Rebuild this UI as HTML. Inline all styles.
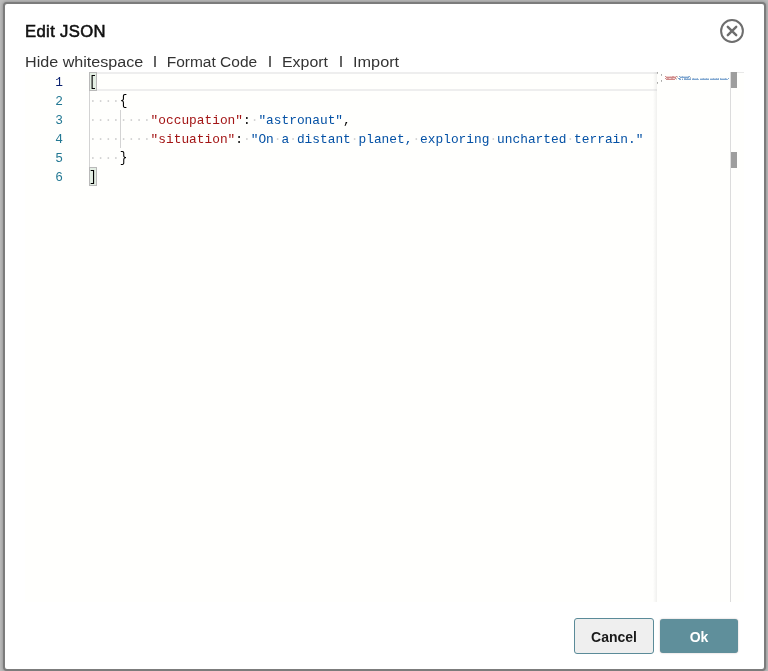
<!DOCTYPE html>
<html><head><meta charset="utf-8">
<style>
*{box-sizing:border-box;margin:0;padding:0}
body{will-change:transform}html,body{width:768px;height:671px;overflow:hidden;background:#bcbcbc;font-family:"Liberation Sans",sans-serif}
.dlg{position:absolute;left:3px;top:2px;width:763px;height:669px;border:2px solid #7c7c7c;border-radius:4px;background:#fff;box-shadow:0 0 3px 1px rgba(0,0,0,.18)}
.abs{position:absolute;white-space:pre}
.title{left:25px;top:22px;font-size:16px;-webkit-text-stroke:0.55px #111;letter-spacing:0.35px;color:#111;line-height:20px;transform:scaleX(1.04);transform-origin:0 0}
.tb{top:53px;font-size:15.5px;color:#333;line-height:18px}
.sep{position:absolute;top:56px;width:1.5px;height:11px;background:#666}
.editor{position:absolute;left:25px;top:72px;width:719px;height:530px;background:#fffffd}
.ln{position:absolute;left:0;margin-top:1px;width:38px;text-align:right;font-family:"Liberation Mono",monospace;font-size:12.83px;line-height:19px;color:#237893}
.code{position:absolute;left:64px;margin-top:1px;font-family:"Liberation Mono",monospace;font-size:12.83px;line-height:19px;white-space:pre;color:#000}
.b{display:inline-block;transform:scaleY(1.07);transform-origin:50% 78%}.k{color:#a31515}.v{color:#0451a5}.w{color:#d3d3d3}
.btn{position:absolute;font-weight:bold;font-size:14px;text-align:center}
</style></head><body>
<div class="dlg"></div>
<div class="abs title">Edit JSON</div>
<svg style="position:absolute;left:718px;top:17px" width="28" height="28" viewBox="0 0 28 28">
<circle cx="14" cy="14" r="10.9" fill="none" stroke="#6e6e6e" stroke-width="2"/>
<path d="M9.8 9.8L18.2 18.2M18.2 9.8L9.8 18.2" stroke="#6e6e6e" stroke-width="2.4" stroke-linecap="round"/>
</svg>
<div class="abs tb" style="left:24.7px;transform:scaleX(1.04);transform-origin:0 0">Hide whitespace</div>
<div class="sep" style="left:154px"></div>
<div class="abs tb" style="left:166.7px;transform:scaleX(1.0);transform-origin:0 0">Format Code</div>
<div class="sep" style="left:269px"></div>
<div class="abs tb" style="left:281.8px;transform:scaleX(1.025);transform-origin:0 0">Export</div>
<div class="sep" style="left:340px"></div>
<div class="abs tb" style="left:352.7px;transform:scaleX(1.05);transform-origin:0 0">Import</div>

<div class="editor">
  <!-- current line -->
  <div style="position:absolute;left:64px;top:0;width:568px;height:19px;border-top:2px solid #eee;border-bottom:2px solid #eee"></div>
  <!-- bracket boxes -->
  <div style="position:absolute;left:64px;top:0;width:8px;height:19px;border:1px solid #b9b9b9;background:#e3eee3"></div>
  <div style="position:absolute;left:64px;top:95px;width:8px;height:19px;border:1px solid #b9b9b9;background:#e3eee3"></div>
  <!-- indent guides -->
  <div style="position:absolute;left:64px;top:19px;width:1px;height:76px;background:#d3d3d3"></div>
  <div style="position:absolute;left:95px;top:38px;width:1px;height:38px;background:#d3d3d3"></div>
  <div class="ln" style="top:0;color:#0b216f">1</div>
  <div class="ln" style="top:19px">2</div>
  <div class="ln" style="top:38px">3</div>
  <div class="ln" style="top:57px">4</div>
  <div class="ln" style="top:76px">5</div>
  <div class="ln" style="top:95px">6</div>
  <div class="code" style="top:0"><span class="b">[</span></div>
  <div class="code" style="top:19px"><span class="w">····</span><span class="b">{</span></div>
  <div class="code" style="top:38px"><span class="w">········</span><span class="k">"occupation"</span>:<span class="w">·</span><span class="v">"astronaut"</span>,</div>
  <div class="code" style="top:57px"><span class="w">········</span><span class="k">"situation"</span>:<span class="w">·</span><span class="v">"On<span class="w">·</span>a<span class="w">·</span>distant<span class="w">·</span>planet,<span class="w">·</span>exploring<span class="w">·</span>uncharted<span class="w">·</span>terrain."</span></div>
  <div class="code" style="top:76px"><span class="w">····</span><span class="b">}</span></div>
  <div class="code" style="top:95px"><span class="b">]</span></div>
  <!-- minimap -->
  <div style="position:absolute;left:628px;top:0;width:4px;height:530px;background:linear-gradient(to right,rgba(0,0,0,0),rgba(0,0,0,.06))"></div><div style="position:absolute;left:632px;top:0;width:73px;height:530px;background:#fffffd"></div>
  <svg style="position:absolute;left:632px;top:0" width="73" height="14" shape-rendering="crispEdges"><rect x="0" y="0" width="1" height="1" fill="#000" fill-opacity="0.33"/><rect x="0" y="1" width="1" height="1" fill="#000" fill-opacity="0.27"/><rect x="4" y="2" width="1" height="1" fill="#000" fill-opacity="0.33"/><rect x="4" y="3" width="1" height="1" fill="#000" fill-opacity="0.27"/><rect x="8" y="4" width="1" height="1" fill="#a31515" fill-opacity="0.5"/><rect x="9" y="4" width="1" height="1" fill="#a31515" fill-opacity="0.2"/><rect x="9" y="5" width="1" height="1" fill="#a31515" fill-opacity="0.5"/><rect x="10" y="4" width="1" height="1" fill="#a31515" fill-opacity="0.2"/><rect x="10" y="5" width="1" height="1" fill="#a31515" fill-opacity="0.5"/><rect x="11" y="4" width="1" height="1" fill="#a31515" fill-opacity="0.2"/><rect x="11" y="5" width="1" height="1" fill="#a31515" fill-opacity="0.5"/><rect x="12" y="4" width="1" height="1" fill="#a31515" fill-opacity="0.2"/><rect x="12" y="5" width="1" height="1" fill="#a31515" fill-opacity="0.5"/><rect x="13" y="4" width="1" height="1" fill="#a31515" fill-opacity="0.25"/><rect x="13" y="5" width="1" height="1" fill="#a31515" fill-opacity="0.5"/><rect x="14" y="4" width="1" height="1" fill="#a31515" fill-opacity="0.2"/><rect x="14" y="5" width="1" height="1" fill="#a31515" fill-opacity="0.5"/><rect x="15" y="4" width="1" height="1" fill="#a31515" fill-opacity="0.4"/><rect x="15" y="5" width="1" height="1" fill="#a31515" fill-opacity="0.5"/><rect x="16" y="4" width="1" height="1" fill="#a31515" fill-opacity="0.4"/><rect x="16" y="5" width="1" height="1" fill="#a31515" fill-opacity="0.5"/><rect x="17" y="4" width="1" height="1" fill="#a31515" fill-opacity="0.2"/><rect x="17" y="5" width="1" height="1" fill="#a31515" fill-opacity="0.5"/><rect x="18" y="4" width="1" height="1" fill="#a31515" fill-opacity="0.2"/><rect x="18" y="5" width="1" height="1" fill="#a31515" fill-opacity="0.5"/><rect x="19" y="4" width="1" height="1" fill="#a31515" fill-opacity="0.5"/><rect x="20" y="4" width="1" height="1" fill="#000" fill-opacity="0.18"/><rect x="20" y="5" width="1" height="1" fill="#000" fill-opacity="0.18"/><rect x="22" y="4" width="1" height="1" fill="#0451a5" fill-opacity="0.5"/><rect x="23" y="4" width="1" height="1" fill="#0451a5" fill-opacity="0.2"/><rect x="23" y="5" width="1" height="1" fill="#0451a5" fill-opacity="0.5"/><rect x="24" y="4" width="1" height="1" fill="#0451a5" fill-opacity="0.2"/><rect x="24" y="5" width="1" height="1" fill="#0451a5" fill-opacity="0.5"/><rect x="25" y="4" width="1" height="1" fill="#0451a5" fill-opacity="0.4"/><rect x="25" y="5" width="1" height="1" fill="#0451a5" fill-opacity="0.5"/><rect x="26" y="4" width="1" height="1" fill="#0451a5" fill-opacity="0.2"/><rect x="26" y="5" width="1" height="1" fill="#0451a5" fill-opacity="0.5"/><rect x="27" y="4" width="1" height="1" fill="#0451a5" fill-opacity="0.2"/><rect x="27" y="5" width="1" height="1" fill="#0451a5" fill-opacity="0.5"/><rect x="28" y="4" width="1" height="1" fill="#0451a5" fill-opacity="0.2"/><rect x="28" y="5" width="1" height="1" fill="#0451a5" fill-opacity="0.5"/><rect x="29" y="4" width="1" height="1" fill="#0451a5" fill-opacity="0.2"/><rect x="29" y="5" width="1" height="1" fill="#0451a5" fill-opacity="0.5"/><rect x="30" y="4" width="1" height="1" fill="#0451a5" fill-opacity="0.2"/><rect x="30" y="5" width="1" height="1" fill="#0451a5" fill-opacity="0.5"/><rect x="31" y="4" width="1" height="1" fill="#0451a5" fill-opacity="0.4"/><rect x="31" y="5" width="1" height="1" fill="#0451a5" fill-opacity="0.5"/><rect x="32" y="4" width="1" height="1" fill="#0451a5" fill-opacity="0.5"/><rect x="33" y="5" width="1" height="1" fill="#000" fill-opacity="0.24"/><rect x="8" y="6" width="1" height="1" fill="#a31515" fill-opacity="0.5"/><rect x="9" y="6" width="1" height="1" fill="#a31515" fill-opacity="0.2"/><rect x="9" y="7" width="1" height="1" fill="#a31515" fill-opacity="0.5"/><rect x="10" y="6" width="1" height="1" fill="#a31515" fill-opacity="0.4"/><rect x="10" y="7" width="1" height="1" fill="#a31515" fill-opacity="0.5"/><rect x="11" y="6" width="1" height="1" fill="#a31515" fill-opacity="0.4"/><rect x="11" y="7" width="1" height="1" fill="#a31515" fill-opacity="0.5"/><rect x="12" y="6" width="1" height="1" fill="#a31515" fill-opacity="0.2"/><rect x="12" y="7" width="1" height="1" fill="#a31515" fill-opacity="0.5"/><rect x="13" y="6" width="1" height="1" fill="#a31515" fill-opacity="0.2"/><rect x="13" y="7" width="1" height="1" fill="#a31515" fill-opacity="0.5"/><rect x="14" y="6" width="1" height="1" fill="#a31515" fill-opacity="0.4"/><rect x="14" y="7" width="1" height="1" fill="#a31515" fill-opacity="0.5"/><rect x="15" y="6" width="1" height="1" fill="#a31515" fill-opacity="0.4"/><rect x="15" y="7" width="1" height="1" fill="#a31515" fill-opacity="0.5"/><rect x="16" y="6" width="1" height="1" fill="#a31515" fill-opacity="0.2"/><rect x="16" y="7" width="1" height="1" fill="#a31515" fill-opacity="0.5"/><rect x="17" y="6" width="1" height="1" fill="#a31515" fill-opacity="0.2"/><rect x="17" y="7" width="1" height="1" fill="#a31515" fill-opacity="0.5"/><rect x="18" y="6" width="1" height="1" fill="#a31515" fill-opacity="0.5"/><rect x="19" y="6" width="1" height="1" fill="#000" fill-opacity="0.18"/><rect x="19" y="7" width="1" height="1" fill="#000" fill-opacity="0.18"/><rect x="21" y="6" width="1" height="1" fill="#0451a5" fill-opacity="0.5"/><rect x="22" y="6" width="1" height="1" fill="#0451a5" fill-opacity="0.55"/><rect x="22" y="7" width="1" height="1" fill="#0451a5" fill-opacity="0.45"/><rect x="23" y="6" width="1" height="1" fill="#0451a5" fill-opacity="0.2"/><rect x="23" y="7" width="1" height="1" fill="#0451a5" fill-opacity="0.5"/><rect x="25" y="6" width="1" height="1" fill="#0451a5" fill-opacity="0.2"/><rect x="25" y="7" width="1" height="1" fill="#0451a5" fill-opacity="0.5"/><rect x="27" y="6" width="1" height="1" fill="#0451a5" fill-opacity="0.4"/><rect x="27" y="7" width="1" height="1" fill="#0451a5" fill-opacity="0.5"/><rect x="28" y="6" width="1" height="1" fill="#0451a5" fill-opacity="0.4"/><rect x="28" y="7" width="1" height="1" fill="#0451a5" fill-opacity="0.5"/><rect x="29" y="6" width="1" height="1" fill="#0451a5" fill-opacity="0.2"/><rect x="29" y="7" width="1" height="1" fill="#0451a5" fill-opacity="0.5"/><rect x="30" y="6" width="1" height="1" fill="#0451a5" fill-opacity="0.4"/><rect x="30" y="7" width="1" height="1" fill="#0451a5" fill-opacity="0.5"/><rect x="31" y="6" width="1" height="1" fill="#0451a5" fill-opacity="0.2"/><rect x="31" y="7" width="1" height="1" fill="#0451a5" fill-opacity="0.5"/><rect x="32" y="6" width="1" height="1" fill="#0451a5" fill-opacity="0.2"/><rect x="32" y="7" width="1" height="1" fill="#0451a5" fill-opacity="0.5"/><rect x="33" y="6" width="1" height="1" fill="#0451a5" fill-opacity="0.4"/><rect x="33" y="7" width="1" height="1" fill="#0451a5" fill-opacity="0.5"/><rect x="35" y="6" width="1" height="1" fill="#0451a5" fill-opacity="0.25"/><rect x="35" y="7" width="1" height="1" fill="#0451a5" fill-opacity="0.5"/><rect x="36" y="6" width="1" height="1" fill="#0451a5" fill-opacity="0.4"/><rect x="36" y="7" width="1" height="1" fill="#0451a5" fill-opacity="0.5"/><rect x="37" y="6" width="1" height="1" fill="#0451a5" fill-opacity="0.2"/><rect x="37" y="7" width="1" height="1" fill="#0451a5" fill-opacity="0.5"/><rect x="38" y="6" width="1" height="1" fill="#0451a5" fill-opacity="0.2"/><rect x="38" y="7" width="1" height="1" fill="#0451a5" fill-opacity="0.5"/><rect x="39" y="6" width="1" height="1" fill="#0451a5" fill-opacity="0.2"/><rect x="39" y="7" width="1" height="1" fill="#0451a5" fill-opacity="0.5"/><rect x="40" y="6" width="1" height="1" fill="#0451a5" fill-opacity="0.4"/><rect x="40" y="7" width="1" height="1" fill="#0451a5" fill-opacity="0.5"/><rect x="41" y="7" width="1" height="1" fill="#0451a5" fill-opacity="0.4"/><rect x="43" y="6" width="1" height="1" fill="#0451a5" fill-opacity="0.2"/><rect x="43" y="7" width="1" height="1" fill="#0451a5" fill-opacity="0.5"/><rect x="44" y="6" width="1" height="1" fill="#0451a5" fill-opacity="0.2"/><rect x="44" y="7" width="1" height="1" fill="#0451a5" fill-opacity="0.5"/><rect x="45" y="6" width="1" height="1" fill="#0451a5" fill-opacity="0.25"/><rect x="45" y="7" width="1" height="1" fill="#0451a5" fill-opacity="0.5"/><rect x="46" y="6" width="1" height="1" fill="#0451a5" fill-opacity="0.4"/><rect x="46" y="7" width="1" height="1" fill="#0451a5" fill-opacity="0.5"/><rect x="47" y="6" width="1" height="1" fill="#0451a5" fill-opacity="0.2"/><rect x="47" y="7" width="1" height="1" fill="#0451a5" fill-opacity="0.5"/><rect x="48" y="6" width="1" height="1" fill="#0451a5" fill-opacity="0.2"/><rect x="48" y="7" width="1" height="1" fill="#0451a5" fill-opacity="0.5"/><rect x="49" y="6" width="1" height="1" fill="#0451a5" fill-opacity="0.4"/><rect x="49" y="7" width="1" height="1" fill="#0451a5" fill-opacity="0.5"/><rect x="50" y="6" width="1" height="1" fill="#0451a5" fill-opacity="0.2"/><rect x="50" y="7" width="1" height="1" fill="#0451a5" fill-opacity="0.5"/><rect x="51" y="6" width="1" height="1" fill="#0451a5" fill-opacity="0.25"/><rect x="51" y="7" width="1" height="1" fill="#0451a5" fill-opacity="0.5"/><rect x="53" y="6" width="1" height="1" fill="#0451a5" fill-opacity="0.2"/><rect x="53" y="7" width="1" height="1" fill="#0451a5" fill-opacity="0.5"/><rect x="54" y="6" width="1" height="1" fill="#0451a5" fill-opacity="0.2"/><rect x="54" y="7" width="1" height="1" fill="#0451a5" fill-opacity="0.5"/><rect x="55" y="6" width="1" height="1" fill="#0451a5" fill-opacity="0.2"/><rect x="55" y="7" width="1" height="1" fill="#0451a5" fill-opacity="0.5"/><rect x="56" y="6" width="1" height="1" fill="#0451a5" fill-opacity="0.4"/><rect x="56" y="7" width="1" height="1" fill="#0451a5" fill-opacity="0.5"/><rect x="57" y="6" width="1" height="1" fill="#0451a5" fill-opacity="0.2"/><rect x="57" y="7" width="1" height="1" fill="#0451a5" fill-opacity="0.5"/><rect x="58" y="6" width="1" height="1" fill="#0451a5" fill-opacity="0.2"/><rect x="58" y="7" width="1" height="1" fill="#0451a5" fill-opacity="0.5"/><rect x="59" y="6" width="1" height="1" fill="#0451a5" fill-opacity="0.4"/><rect x="59" y="7" width="1" height="1" fill="#0451a5" fill-opacity="0.5"/><rect x="60" y="6" width="1" height="1" fill="#0451a5" fill-opacity="0.2"/><rect x="60" y="7" width="1" height="1" fill="#0451a5" fill-opacity="0.5"/><rect x="61" y="6" width="1" height="1" fill="#0451a5" fill-opacity="0.4"/><rect x="61" y="7" width="1" height="1" fill="#0451a5" fill-opacity="0.5"/><rect x="63" y="6" width="1" height="1" fill="#0451a5" fill-opacity="0.4"/><rect x="63" y="7" width="1" height="1" fill="#0451a5" fill-opacity="0.5"/><rect x="64" y="6" width="1" height="1" fill="#0451a5" fill-opacity="0.2"/><rect x="64" y="7" width="1" height="1" fill="#0451a5" fill-opacity="0.5"/><rect x="65" y="6" width="1" height="1" fill="#0451a5" fill-opacity="0.2"/><rect x="65" y="7" width="1" height="1" fill="#0451a5" fill-opacity="0.5"/><rect x="66" y="6" width="1" height="1" fill="#0451a5" fill-opacity="0.2"/><rect x="66" y="7" width="1" height="1" fill="#0451a5" fill-opacity="0.5"/><rect x="67" y="6" width="1" height="1" fill="#0451a5" fill-opacity="0.2"/><rect x="67" y="7" width="1" height="1" fill="#0451a5" fill-opacity="0.5"/><rect x="68" y="6" width="1" height="1" fill="#0451a5" fill-opacity="0.4"/><rect x="68" y="7" width="1" height="1" fill="#0451a5" fill-opacity="0.5"/><rect x="69" y="6" width="1" height="1" fill="#0451a5" fill-opacity="0.2"/><rect x="69" y="7" width="1" height="1" fill="#0451a5" fill-opacity="0.5"/><rect x="70" y="7" width="1" height="1" fill="#0451a5" fill-opacity="0.4"/><rect x="71" y="6" width="1" height="1" fill="#0451a5" fill-opacity="0.5"/><rect x="4" y="8" width="1" height="1" fill="#000" fill-opacity="0.33"/><rect x="4" y="9" width="1" height="1" fill="#000" fill-opacity="0.27"/><rect x="0" y="10" width="1" height="1" fill="#000" fill-opacity="0.33"/><rect x="0" y="11" width="1" height="1" fill="#000" fill-opacity="0.27"/></svg>
  <!-- overview ruler -->
  <div style="position:absolute;left:705px;top:0;width:1px;height:530px;background:#dcdcdc"></div>
  <div style="position:absolute;left:706px;top:0;width:6px;height:16px;background:#9e9e9e"></div>
  <div style="position:absolute;left:706px;top:80px;width:6px;height:16px;background:#9e9e9e"></div>
  <div style="position:absolute;left:712px;top:0;width:7px;height:1px;background:#e8e8e8"></div>
</div>

<div class="btn" style="left:574px;top:618px;width:80px;height:36px;border:1px solid #5b8b99;border-radius:3px;background:#efefef;color:#1a1a1a;line-height:36px">Cancel</div>
<div class="btn" style="left:660px;top:619px;width:78px;height:34px;border-radius:3px;background:#5f8f9b;color:#fff;line-height:36px;box-shadow:0 0 1.5px rgba(90,60,60,.45)">Ok</div>
</body></html>
